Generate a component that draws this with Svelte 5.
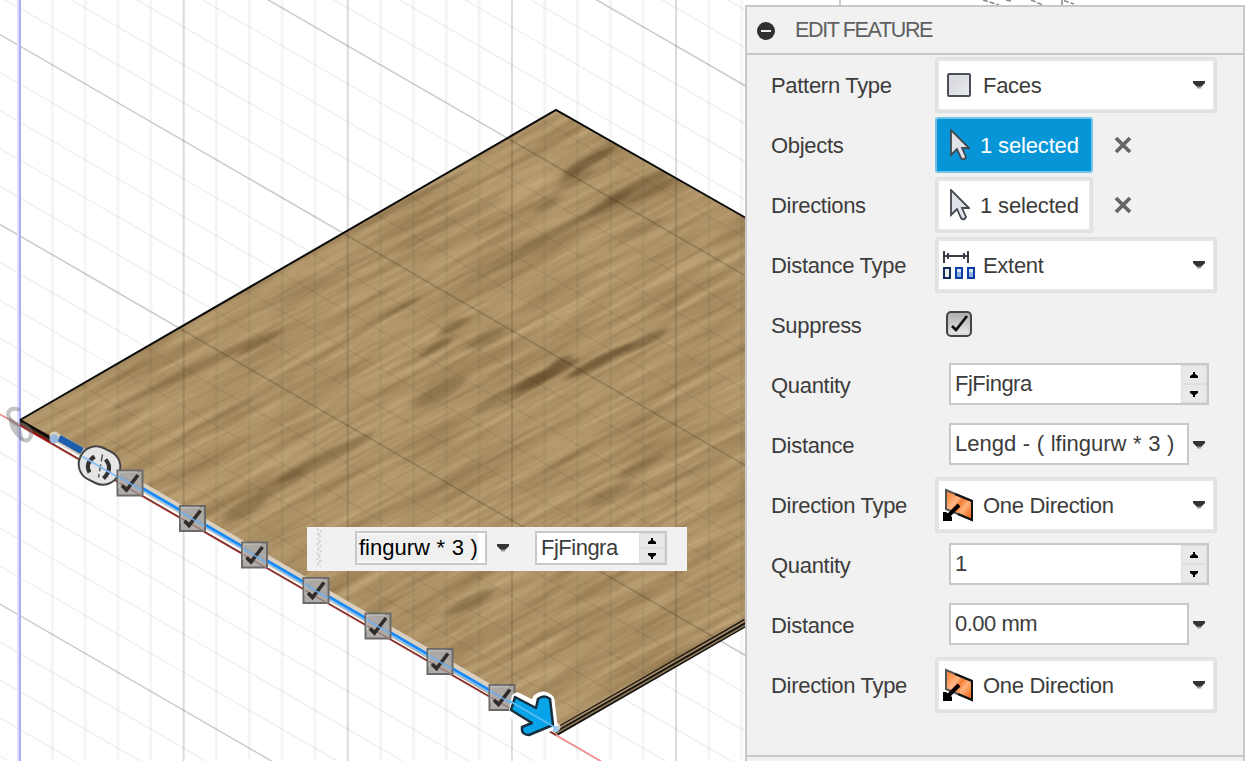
<script>
  const slope = 0.578;
  const verticals = Array.from({ length: 23 }, (_, i) => ({ x: 19.5 + i * 32.83, major: i % 5 === 0 }));
  const diagonals = Array.from({ length: 52 }, (_, i) => {
    const k = i - 20;
    return { y: 414.3 + (k - 10) * 37.96, major: (k - 10) % 5 === 0 };
  });
  const marks = [[130, 483], [192.5, 518.5], [254.5, 555], [316, 590.5], [378, 626], [440, 661.5], [502, 697.5]];
  const smudges = [
    [589, 161, 30, 5, 0.55], [574, 174, 10, 4, 0.4], [548, 204, 14, 4, 0.35], [640, 185, 40, 6, 0.45], [652, 190, 32, 4, 0.4], [610, 204, 25, 7, 0.3],
    [575, 178, 22, 6, 0.25], [640, 229, 25, 3, 0.25], [570, 225, 60, 4, 0.3], [505, 262, 50, 4, 0.2], [453, 326, 16, 5, 0.4],
    [437, 347, 18, 4, 0.4], [487, 338, 22, 6, 0.35], [545, 376, 36, 5, 0.6], [560, 362, 12, 4, 0.6],
    [600, 361, 38, 5, 0.65], [645, 341, 25, 5, 0.5], [514, 392, 45, 7, 0.32], [440, 392, 30, 8, 0.3],
    [320, 280, 70, 3, 0.25], [400, 308, 22, 3, 0.3], [260, 342, 24, 5, 0.3], [380, 215, 100, 3, 0.22], [180, 375, 80, 3, 0.25], [450, 225, 60, 3, 0.25],
    [325, 458, 55, 6, 0.35], [280, 485, 30, 6, 0.25], [245, 508, 25, 8, 0.3], [470, 602, 28, 6, 0.38],
    [640, 467, 26, 5, 0.28], [610, 495, 26, 5, 0.25], [690, 472, 40, 3, 0.25],
    [600, 660, 80, 3, 0.12], [680, 400, 60, 4, 0.15], [260, 395, 80, 3, 0.15], [440, 485, 100, 5, 0.1]
  ];
  const rows = [
    { label: 'Pattern Type', kind: 'combo', icon: 'face', value: 'Faces' },
    { label: 'Objects', kind: 'select', value: '1 selected', active: true },
    { label: 'Directions', kind: 'select', value: '1 selected' },
    { label: 'Distance Type', kind: 'combo', icon: 'extent', value: 'Extent' },
    { label: 'Suppress', kind: 'check' },
    { label: 'Quantity', kind: 'spin', value: 'FjFingra' },
    { label: 'Distance', kind: 'expr', value: 'Lengd - ( lfingurw * 3 )', formula: true },
    { label: 'Direction Type', kind: 'combo', icon: 'one', value: 'One Direction' },
    { label: 'Quantity', kind: 'spin', value: '1' },
    { label: 'Distance', kind: 'expr', value: '0.00 mm' },
    { label: 'Direction Type', kind: 'combo', icon: 'one', value: 'One Direction' }
  ];
</script>

{#snippet caret()}
  <svg class="caret" width="12" height="8" viewBox="0 0 12 8"><path d="M0 0H12V2L8 6H4L0 2Z" fill="#333" /><path d="M4 5.5H8V7.5H4Z" fill="#999" /></svg>
{/snippet}

{#snippet spinner()}
  <span class="spinner">
    <span><svg width="8" height="6" viewBox="0 0 8 6"><path d="M3 0H5V2L8 4V6H0V4L3 2Z" /></svg></span>
    <span><svg width="8" height="6" viewBox="0 0 8 6"><path d="M0 0H8V2L5 4V6H3V4L0 2Z" /></svg></span>
  </span>
{/snippet}

{#snippet grid(tone)}
  {#each verticals as v}
    <line x1={v.x} y1="0" x2={v.x} y2="761" stroke={tone} stroke-opacity={v.major ? 0.14 : 0.04} stroke-width={v.major ? 2 : 3} />
  {/each}
  {#each diagonals as d}
    <line x1="0" y1={d.y} x2="746" y2={d.y + 746 * slope} stroke={tone} stroke-opacity={d.major ? 0.2 : 0.06} stroke-width="1.6" />
  {/each}
{/snippet}

<main>
  <svg class="scene" width="1249" height="761" viewBox="0 0 1249 761">
    <defs>
      <clipPath id="plate"><path d="M20 420L556 110L746 218V624L556 733Z" /></clipPath>
      <filter id="grain" x="0" y="0" width="100%" height="100%" color-interpolation-filters="sRGB">
        <feTurbulence type="fractalNoise" baseFrequency="0.009 0.15" numOctaves="4" seed="12" />
        <feColorMatrix values="0.2 0 0 0 0.592  0.2 0 0 0 0.485  0.19 0 0 0 0.32  0 0 0 0 1" />
      </filter>
      <filter id="tint" x="0" y="0" width="100%" height="100%" color-interpolation-filters="sRGB">
        <feTurbulence type="fractalNoise" baseFrequency="0.008 0.055" numOctaves="3" seed="23" />
        <feColorMatrix values="0 0 0 0 0.42  0 0 0 0 0.31  0 0 0 0 0.16  0 .8 0 0 -0.37" />
      </filter>
      <filter id="soft" x="-30%" y="-100%" width="160%" height="300%"><feGaussianBlur stdDeviation="5 1.5" /></filter>
    </defs>
    <rect width="1249" height="761" fill="#fff" />
    {@render grid('#000')}
    <path d="M18.5 0V761" stroke="#dedeff" stroke-width="3" /><path d="M20 0V761" stroke="#aaaaff" stroke-width="2" />
    <g clip-path="url(#plate)">
      <rect width="760" height="761" fill="#b0946a" />
      <g transform="translate(-180 400) rotate(-28)">
        <rect y="-320" width="1100" height="1000" filter="url(#grain)" />
        <rect y="-320" width="1100" height="1000" filter="url(#tint)" />
      </g>
      {#each smudges as [x, y, rx, ry, o]}
        <g transform="translate({x} {y}) rotate(-27)">
          <ellipse {rx} {ry} fill="#5b4224" opacity={o} filter="url(#soft)" />
        </g>
      {/each}
      {@render grid('#20180c')}
    </g>
    <path d="M0 414.3L601 761" stroke="#ff8080" stroke-width="1.4" />
    <path d="M20 420L556 110L746 218" fill="none" stroke="#0a0a0a" stroke-width="2" />
    <path d="M556 732L746 622.5" stroke="#111" stroke-width="8" /><path d="M558 728.5L746 620.5" stroke="#a48a62" stroke-width="2" /><path d="M556 733.5L746 624.8" stroke="#8c7550" stroke-width="1.6" />
    <path d="M20 420V425L54 444V437Z" fill="#4c3b21" /><path d="M20 420L50 438" stroke="#080808" stroke-width="2.5" />
    <path d="M20 425L556 735" stroke="#7d2a24" stroke-width="1.6" /><path d="M20 425L50 442" stroke="#990f0f" stroke-width="2" />
    <g fill="none" stroke="#777" stroke-opacity=".43">
      <path d="M20 410Q10 406 8 414Q8 421 19 425" stroke-width="4" />
      <path d="M9 416L20 425L24 441Q8 434 9 416" fill="#777" fill-opacity=".43" stroke="none" />
      <path d="M20 438Q28 444 31 436Q32 428 21 424" stroke-width="4" />
    </g>
    <path d="M54 436L556 727" stroke="#dbcfbd" stroke-width="9" stroke-linecap="round" />
    <path d="M100 465L556 731" stroke="#84bdf4" stroke-width="2.4" /><path d="M120 475L510 702" stroke="#1689f8" stroke-width="2.6" />
    <path d="M59 438L82 451" stroke="#1e5dac" stroke-width="7" /><circle cx="54" cy="439" r="4.5" fill="#98b9dc" />
    <g transform="translate(99.5 465.5)">
      <rect x="-21" y="-17.5" width="42" height="35" rx="17" transform="rotate(26)" fill="#e5e5e5" stroke="#444" stroke-width="2" />
      <path d="M-5-9Q-15-2-10 7M6-6Q14 3 4 13" fill="none" stroke="#333" stroke-width="4" />
      <path d="M3-11L-1 12" stroke="#555" stroke-width="1.5" stroke-dasharray="7 3" />
      <path d="M-17-9L19 12" stroke="#84bdf4" stroke-width="2" />
    </g>
    {#each marks as [x, y]}
      <g transform="translate({x} {y})">
        <rect x="-12.5" y="-12.5" width="25" height="25" fill="#aaa7a4" fill-opacity=".94" stroke="#6c6a68" stroke-width="2" />
        <path d="M-11 5V-11H7" fill="none" stroke="#d8d6d3" stroke-opacity=".35" stroke-width="2" />
        <path d="M-11 0L12 13" stroke="#9c7772" stroke-width="1.3" />
        <path d="M-8 2.5L-3.5 7L8-8" fill="none" stroke="#302c29" stroke-width="3.6" />
        <path d="M-12-6.5L12 7.5" stroke="#6db2f2" stroke-width="1.6" stroke-opacity=".85" />
      </g>
    {/each}
    <g stroke-linejoin="round">
      <path d="M517 698L535 707L538 699Q544 695 549 700L552 725L530 733Q524 733 524 728L530 724L514 714Z" fill="#fff" stroke="#fff" stroke-width="11" />
      <path d="M515 697L536 708L538 699Q544 694 550 699L553 725L529 735Q521 735 522 727L532 723L511 710Z" fill="#08a4ea" stroke="#172f3c" stroke-width="2.5" />
      <path d="M508 700L556 728" stroke="#5cbcf3" stroke-width="1.6" /><circle cx="556" cy="729" r="3" fill="#9cccf5" />
    </g>
    <path d="M983 0L999 5M1006 0L1011 1M1031 0L1043 5M1062 5V0L1074 4" stroke="#888" fill="none" stroke-width="1.5" stroke-dasharray="5 2" />
    <path d="M840 0V5" stroke="#ccc" stroke-width="2" />
  </svg>

  <div class="mini">
    <svg width="8" height="40" viewBox="0 0 8 40"><path d="M1 1L5 3L1 6L5 8L1 11L5 13L1 16L5 18L1 21L5 23L1 26L5 28L1 31L5 33L1 36L5 39" fill="none" stroke="#ccc" stroke-width="1.4" stroke-dasharray="2 1.5" /></svg>
    <div class="field mini-expr formula"><span>fingurw * 3 )</span></div>
    {@render caret()}
    <div class="field mini-spin"><span>FjFingra</span>{@render spinner()}</div>
  </div>

  <section class="panel">
    <header>
      <svg width="18" height="18" viewBox="0 0 18 18"><circle cx="9" cy="9" r="9" fill="#303030" /><path d="M4 9H14" stroke="#eee" stroke-width="2" /></svg>
      <h1>EDIT FEATURE</h1>
    </header>
    <div class="rows">
      {#each rows as row}
        <div class="row">
          <span class="label">{row.label}</span>
          {#if row.kind === 'combo'}
            <div class="box combo">
              <svg width="38" height="40" viewBox="0 0 38 40">
                {#if row.icon === 'face'}
                  <defs><linearGradient id="fg" x2="1" y2="1"><stop stop-color="#d5d7dd" /><stop offset="1" stop-color="#e8e9ec" /></linearGradient></defs>
                  <rect x="7" y="9" width="22" height="22" rx="1" fill="url(#fg)" stroke="#4c4e58" stroke-width="2" />
                {:else if row.icon === 'extent'}
                  <path d="M3 6V18M27 6V18M3 11H27M7 8V14M23 8V14" stroke="#363b44" stroke-width="2" fill="none" />
                  <path d="M3 23H9V33H3Z" fill="#eee" stroke="#132f5c" stroke-width="2" />
                  <path d="M15 23H21V33H15ZM27 23H33V33H27Z" fill="#dce7f7" stroke="#0d3da8" stroke-width="2" /><path d="M16 27H20V32H16ZM28 27H32V32H28Z" fill="#93b4e0" />
                {:else}
                  <defs><linearGradient id="og" x2="1" y2=".9"><stop stop-color="#f48035" /><stop offset=".2" stop-color="#ff944e" /><stop offset=".4" stop-color="#ffb789" /><stop offset=".52" stop-color="#f77c30" /><stop offset=".68" stop-color="#ffb27c" /><stop offset="1" stop-color="#f0640d" /></linearGradient></defs>
                  <path d="M5 5L31 16V35L5 24Z" fill="url(#og)" stroke="#555" stroke-width="2" /><path d="M14 9L31 16V35L17 29" fill="none" stroke="#111" stroke-width="2" />
                  <path d="M18 20L6 32" stroke="#000" stroke-width="4" /><path d="M2 27H5L11 32V36H2Z" />
                {/if}
              </svg>
              <span class="text">{row.value}</span>{@render caret()}
            </div>
          {:else if row.kind === 'select'}
            <div class="box pick" class:active={row.active}>
              <svg width="20" height="32" viewBox="0 0 20 32"><path d="M1 1V26L7 20L11 29Q14 32 16 28L12 19H19Z" fill="#dfe2e8" stroke="#434950" stroke-width="1.8" /></svg>
              <span class="text">{row.value}</span>
            </div>
            <svg class="clear" width="18" height="18" viewBox="0 0 18 18"><path d="M2 2L16 16M16 2L2 16" stroke="#666" stroke-width="3.8" /></svg>
          {:else if row.kind === 'check'}
            <svg class="check" width="28" height="28" viewBox="0 0 28 28">
              <defs><linearGradient id="cg" x2="0" y2="1"><stop stop-color="#aaa" /><stop offset="1" stop-color="#eee" /></linearGradient></defs>
              <rect x="2" y="2" width="24" height="24" rx="4" fill="url(#cg)" stroke="#444" stroke-width="2" /><rect x="4" y="4" width="20" height="20" rx="2" fill="none" stroke="#bbb" stroke-opacity=".6" />
              <path d="M7 16L11 20L22 6" fill="none" stroke="#111" stroke-width="2.8" />
            </svg>
          {:else if row.kind === 'spin'}
            <div class="field spin"><span>{row.value}</span>{@render spinner()}</div>
          {:else}
            <div class="field expr" class:formula={row.formula}><span>{row.value}</span></div>{@render caret()}
          {/if}
        </div>
      {/each}
    </div>
  </section>
</main>

<style>
  :global(body) { overflow: hidden; }
  main { position: relative; width: 1249px; height: 761px; overflow: hidden; font: 22px/26px "Liberation Sans", Arial, sans-serif; letter-spacing: -.3px; color: #3c3c3c; }
  .scene { display: block; }
  .panel { position: absolute; left: 745px; top: 5px; width: 500px; height: 760px; box-sizing: border-box; border: 2px solid #c8c8c8; background: #f1f1f1; }
  header { display: flex; align-items: center; height: 46px; padding-left: 10px; gap: 20px; border-bottom: 2px solid #c8c8c8; }
  header svg { margin-top: 1px; }
  h1 { margin: 0; font-size: 21.5px; font-weight: 400; letter-spacing: -1.35px; color: #606060; white-space: nowrap; }
  .rows { height: 700px; border-bottom: 2px solid #c8c8c8; }
  .row { height: 60px; display: flex; align-items: center; padding-left: 24px; }
  .label { width: 164px; flex: none; padding-top: 1px; box-sizing: border-box; }
  .box { box-sizing: border-box; height: 56px; border: 2px solid #e0e0e0; outline: 2px solid #e6e6e6; outline-offset: -4px; border-radius: 3px; background: #fff; display: flex; align-items: center; }
  .text { padding-top: 1px; }
  .combo { width: 282px; padding: 0 10px 0 4px; }
  .combo svg:first-child { margin-right: 4px; }
  .combo .caret { margin-left: auto; }
  .pick { width: 158px; padding-left: 13px; gap: 10px; letter-spacing: -.15px; white-space: nowrap; }
  .active { background: #0696d7; border-color: #75c3e8; outline: none; color: #fff; }
  .clear { margin-left: 21px; }
  .check { margin: -2px 0 0 10px; }
  .field { box-sizing: border-box; border: 2px solid #c8c8c8; background: #fff; display: flex; align-items: center; justify-content: space-between; height: 42px; padding-left: 4px; letter-spacing: -.5px; white-space: nowrap; }
  .row .field { margin: -2px 0 0 14px; }
  .field > span:first-child { margin-top: -1px; }
  .formula { letter-spacing: 0; word-spacing: .5px; }
  .spin { width: 260px; }
  .expr { width: 240px; }
  .row > .caret { margin-left: 4px; }
  .spinner { width: 26px; align-self: stretch; display: flex; flex-direction: column; background: #e9e9e9; }
  .spinner span { flex: 1; display: flex; align-items: center; justify-content: center; border: 1px solid #dedede; }
  .mini { position: absolute; left: 307px; top: 527px; width: 380px; height: 44px; background: #f1f1f1; display: flex; align-items: center; box-sizing: border-box; padding: 0 20px 2px 9px; }
  .mini .field { height: 34px; }
  .mini .mini-expr { width: 132px; margin: 0 10px 0 31px; padding-left: 0; color: #000; }
  .mini-expr span { background: #f0f0f0; padding: 1px 0 1px 2px; }
  .mini-spin { width: 132px; margin-left: 26px; }
</style>
